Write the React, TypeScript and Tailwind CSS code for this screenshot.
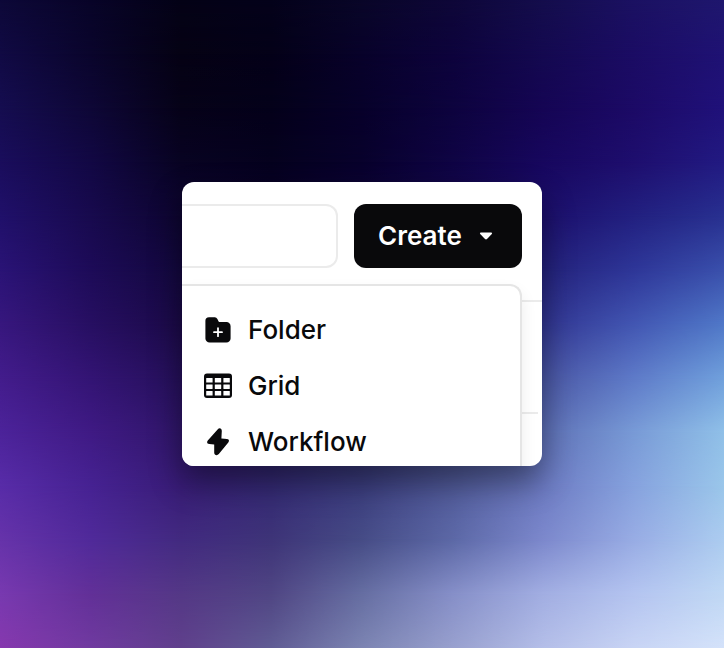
import React from "react";

// Horizontal colour bands; each one fades in over the band above it.
const stops: string[][] = [
  ["#0d0838", "#080428", "#040216", "#04021a", "#090628", "#0e0738", "#140d4c", "#1b1162", "#1f176e"],
  ["#110a44", "#0a052c", "#050214", "#040118", "#08022a", "#0d033c", "#140950", "#1b0c64", "#1f1274"],
  ["#150d50", "#0e0736", "#060218", "#04011a", "#07012a", "#0d033e", "#150554", "#1c0a66", "#20117a"],
  ["#1a0d5c", "#120844", "#080322", "#05011e", "#08012c", "#0f0444", "#17075e", "#1e0e6e", "#221a82"],
  ["#20106a", "#180a4e", "#0d0530", "#0a042a", "#0e063a", "#14094e", "#1c0f6c", "#222080", "#283090"],
  ["#2a1376", "#1d0b58", "#13083e", "#100838", "#160e4a", "#1c1662", "#24227c", "#2e3698", "#3a50ac"],
  ["#37177e", "#270f62", "#1b0a48", "#190c46", "#1e1852", "#282672", "#323692", "#4256b2", "#5078c8"],
  ["#431c8c", "#331474", "#25105a", "#221456", "#2a2462", "#3a3c84", "#4a56a4", "#5e7ac8", "#70a0dc"],
  ["#4c239a", "#3f1a84", "#30166a", "#2c1e68", "#343474", "#4a5292", "#5e70b6", "#789ad6", "#90c0e8"],
  ["#582ca8", "#462292", "#381c76", "#342a74", "#3c3e80", "#525c9c", "#6c7ac2", "#86a2de", "#9ac6ea"],
  ["#6633aa", "#502a9a", "#422a80", "#3e3478", "#464c86", "#5c68a6", "#7c88cc", "#98ace4", "#acccf0"],
  ["#7839b0", "#623098", "#543886", "#504684", "#666ea2", "#868fc8", "#a2aee2", "#b4c4f0", "#c0d8f4"],
  ["#8638ae", "#703aa0", "#60408c", "#605c94", "#7c84b2", "#98a0ce", "#b4bee8", "#c8d4f4", "#d4e2fa"],
];

function Backdrop() {
  const last = stops.length - 1;
  return (
    <div className="absolute inset-0 overflow-hidden" aria-hidden>
      <div className="absolute inset-0">
        {stops.map((row, i) => {
          const mask =
            i === 0
              ? undefined
              : `linear-gradient(to bottom, transparent ${((i - 1) / last) * 100}%, black ${(i / last) * 100}%)`;
          return (
            <div
              key={i}
              className="absolute inset-0"
              style={{
                backgroundImage: `linear-gradient(to right, ${row.join(", ")})`,
                maskImage: mask,
              }}
            />
          );
        })}
      </div>
    </div>
  );
}

function FolderIcon() {
  return (
    <svg width="28" height="28" viewBox="0 0 28 28">
      <path
        d="M5 1.2H10.8Q12.5 1.2 13.4 3L14.6 5.4Q15 6 16 6H22.4A4.2 4.2 0 0 1 26.6 10.2V22.4A4.2 4.2 0 0 1 22.4 26.6H5.6A4.2 4.2 0 0 1 1.4 22.4V4.8A3.6 3.6 0 0 1 5 1.2Z"
        fill="#09090b"
      />
      <path d="M14 12.2V20.2M10 16.2H18" stroke="white" strokeWidth="1.8" strokeLinecap="round" />
    </svg>
  );
}

function GridIcon() {
  return (
    <svg width="28" height="28" viewBox="0 0 28 28">
      <rect x="0" y="1.6" width="28" height="24.4" rx="3" fill="#09090b" />
      <g fill="white">
        {[6, 12.4, 19].map((y) =>
          [2.2, 10.8, 19.4].map((x) => <rect key={`${x}-${y}`} x={x} y={y} width="6.4" height="4.5" rx="0.3" />)
        )}
      </g>
    </svg>
  );
}

function BoltIcon() {
  return (
    <svg width="28" height="28" viewBox="0 0 28 28">
      <path
        d="M13.6 1.4L3.8 12.6C2.5 14.2 3.2 15.8 5.2 15.9L10.2 16.4L10.2 24.4C10.2 27.3 13.2 28 14.8 26L24.3 14.4C25.6 12.7 24.9 11.3 23 11.1L17.4 10.6L17.8 3C17.8 0.3 15.4-.5 13.6 1.4Z"
        fill="#09090b"
      />
    </svg>
  );
}

function MenuItem({ icon, label }: { icon: React.ReactNode; label: string }) {
  return (
    <div className="flex h-14 items-center gap-4 pl-[22px] text-[26px] font-medium leading-none text-[#09090b]">
      {icon}
      <span>{label}</span>
    </div>
  );
}

export default function App() {
  return (
    <div className="relative flex h-[648px] w-[724px] items-center justify-center overflow-hidden font-['Inter',sans-serif] antialiased">
      <Backdrop />
      <div className="relative h-[284px] w-[360px] overflow-hidden rounded-xl bg-white shadow-[0_16px_32px_rgba(0,0,0,0.42)]">
        <div className="flex h-[120px] items-start gap-4 border-b-2 border-[#ebebeb] pt-[22px]">
          <div className="h-16 w-[156px] rounded-r-xl border-2 border-l-0 border-[#ebebeb]" />
          <button className="flex h-16 w-[168px] items-center rounded-xl bg-[#09090b] pl-6 text-[26px] font-semibold text-white">
            <span className="pb-0.5">Create</span>
            <svg className="ml-[17px]" width="14" height="8" viewBox="0 0 14 8">
              <path d="M1.8 0.6H12.2Q13.8 0.8 12.8 2.1L8 7Q7 7.9 6 7L1.2 2.1Q.2 .8 1.8 .6Z" fill="white" />
            </svg>
          </button>
        </div>
        <div className="h-28 w-[356px] border-b-2 border-[#ebebeb]" />
        <div className="absolute top-[102px] left-0 h-[240px] w-[340px] rounded-tr-xl border-t-2 border-r-2 border-[#e5e5e5] bg-white pt-4 shadow-[0_8px_16px_rgba(0,0,0,0.08)]">
          <MenuItem icon={<FolderIcon />} label="Folder" />
          <MenuItem icon={<GridIcon />} label="Grid" />
          <MenuItem icon={<BoltIcon />} label="Workflow" />
        </div>
      </div>
    </div>
  );
}
